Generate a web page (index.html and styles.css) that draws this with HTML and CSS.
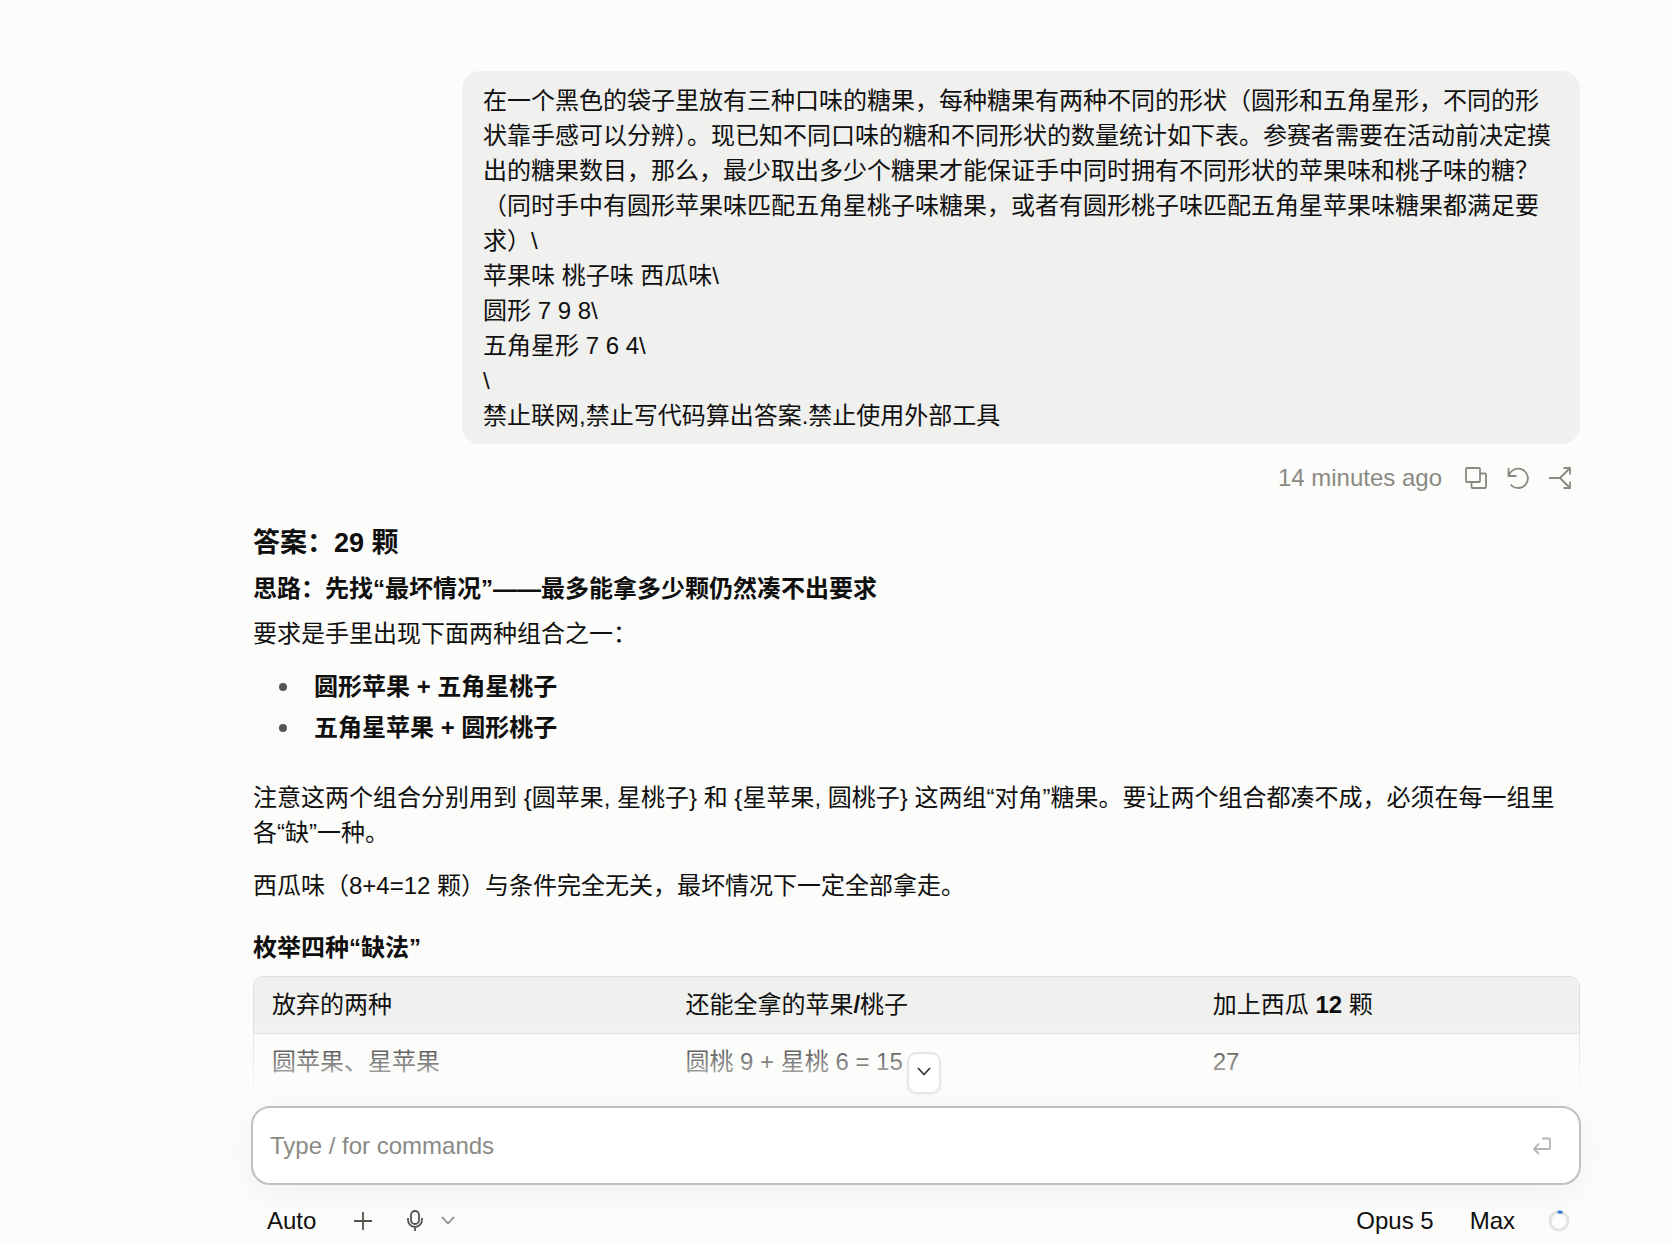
FILE: index.html
```html
<!DOCTYPE html>
<html lang="zh-CN">
<head>
<meta charset="utf-8">
<meta name="viewport" content="width=device-width, initial-scale=1">
<title>答案：29 颗</title>
<link rel="stylesheet" href="styles.css">
</head>
<body>
<div class="app">
  <main class="thread">
    <article class="prompt">
      <p class="bubble">在一个黑色的袋子里放有三种口味的糖果，每种糖果有两种不同的形状（圆形和五角星形，不同的形状靠手感可以分辨）。现已知不同口味的糖和不同形状的数量统计如下表。参赛者需要在活动前决定摸出的糖果数目，那么，最少取出多少个糖果才能保证手中同时拥有不同形状的苹果味和桃子味的糖？（同时手中有圆形苹果味匹配五角星桃子味糖果，或者有圆形桃子味匹配五角星苹果味糖果都满足要求）\<br>苹果味 桃子味 西瓜味\<br>圆形 7 9 8\<br>五角星形 7 6 4\<br>\<br>禁止联网,禁止写代码算出答案.禁止使用外部工具</p>
      <div class="meta">
        <time>14 minutes ago</time>
        <button class="icon-button" type="button" aria-label="Copy">
          <svg width="22" height="22" viewBox="0 0 22 22"><rect x="1" y="1" width="14" height="14" rx="1"/><path d="M15 6.500h5a1 1 0 0 1 1 1V20a1 1 0 0 1-1 1H7.500a1 1 0 0 1-1-1v-5"/></svg>
        </button>
        <button class="icon-button" type="button" aria-label="Retry">
          <svg width="22" height="22" viewBox="0 0 22 22"><path d="M1.500 1v8h8M1.800 8.800A9.700 9.700 0 1 1 3.700 17.500"/></svg>
        </button>
        <button class="icon-button" type="button" aria-label="Fork">
          <svg width="22" height="22" viewBox="0 0 22 22"><path d="M0 11h11L21 1M11 11l10 10M14.500 1H21v6.500M14.500 21H21v-6.500"/></svg>
        </button>
      </div>
    </article>

    <article class="answer">
      <h1>答案：29 颗</h1>
      <h2>思路：先找“最坏情况”——最多能拿多少颗仍然凑不出要求</h2>
      <p class="lead">要求是手里出现下面两种组合之一：</p>
      <ul>
        <li>圆形苹果 + 五角星桃子</li>
        <li>五角星苹果 + 圆形桃子</li>
      </ul>
      <p>注意这两个组合分别用到 {圆苹果, 星桃子} 和 {星苹果, 圆桃子} 这两组“对角”糖果。要让两个组合都凑不成，必须在每一组里各“缺”一种。</p>
      <p>西瓜味（8+4=12 颗）与条件完全无关，最坏情况下一定全部拿走。</p>
      <h3>枚举四种“缺法”</h3>
      <div class="table-frame">
        <table>
          <thead>
            <tr><th class="col-drop">放弃的两种</th><th class="col-keep">还能全拿的苹果<b>/</b>桃子</th><th>加上西瓜 <b>12</b> 颗</th></tr>
          </thead>
          <tbody>
            <tr><td>圆苹果、星苹果</td><td>圆桃 9 + 星桃 6 = 15</td><td>27</td></tr>
            <tr><td></td><td></td><td></td></tr>
          </tbody>
        </table>
      </div>
    </article>
  </main>

  <footer class="dock">
    <button class="jump" type="button" aria-label="Scroll to bottom">
      <svg width="14" height="9" viewBox="0 0 14 9"><path d="M1 1l6 6.500L13 1"/></svg>
    </button>
    <form class="composer">
      <input type="text" aria-label="Message" placeholder="Type / for commands">
      <button class="send" type="button" aria-label="Send">
        <svg width="18" height="18" viewBox="0 0 18 18"><path d="M9 1.500h7a1 1 0 0 1 1 1V11a1 1 0 0 1-1 1H1M6 6.500L1 12l5 5"/></svg>
      </button>
    </form>
    <div class="toolbar">
      <button class="text-button" type="button">Auto</button>
      <button class="tool plus" type="button" aria-label="Add">
        <svg width="18" height="18" viewBox="0 0 18 18"><path d="M9 0v18M0 9h18"/></svg>
      </button>
      <button class="tool mic" type="button" aria-label="Dictate">
        <svg width="16" height="22" viewBox="0 0 16 22"><rect x="4" y="1" width="8" height="13" rx="4"/><path d="M1 8v2a7 7 0 0 0 14 0V8M8 17v4"/></svg>
      </button>
      <button class="tool more" type="button" aria-label="Dictation options">
        <svg width="14" height="9" viewBox="0 0 14 9"><path d="M1 1l6 6.500L13 1"/></svg>
      </button>
      <span class="spacer"></span>
      <button class="text-button" type="button">Opus 5</button>
      <button class="text-button effort" type="button">Max</button>
      <button class="tool usage" type="button" aria-label="Context usage">
        <svg width="22" height="22" viewBox="0 0 22 22"><circle class="track" cx="11" cy="11" r="9"/><path class="used" d="M10.800 2a9 9 0 0 1 2.400.3"/></svg>
      </button>
    </div>
  </footer>
</div>
</body>
</html>
```

FILE: styles.css
```css
:root {
  --page: #fcfcfb;
  --panel: #f0f0ef;
  --ink: #0f0f0e;
  --muted: #8a8a84;
  --line: #dededd;
}

* {
  box-sizing: border-box;
}

body,
h1,
h2,
h3,
p,
ul {
  margin: 0;
}

body {
  background: var(--page);
  color: var(--ink);
  font: 24px/35px "Liberation Sans", "Noto Sans CJK SC", sans-serif;
}

button,
input {
  font: inherit;
  color: inherit;
  background: none;
  border: 0;
  padding: 0;
}

svg {
  display: block;
  fill: none;
  stroke: currentColor;
  stroke-width: 1.800;
}

.app {
  display: flex;
  flex-direction: column;
  height: 100vh;
}

.thread {
  position: relative;
  flex: 1;
  min-height: 0;
  overflow: hidden;
  padding: 71px 93px 0 253px;
}

.thread::after {
  content: "";
  position: absolute;
  left: 0;
  right: 0;
  bottom: 0;
  height: 84px;
  background: linear-gradient(to bottom, transparent, var(--page));
}

.prompt {
  display: flex;
  flex-direction: column;
  align-items: flex-end;
}

.bubble {
  max-width: 1118px;
  padding: 12px 20px 11px 21px;
  border-radius: 18px;
  background: var(--panel);
}

.meta {
  display: flex;
  align-items: center;
  gap: 20px;
  padding: 16px 9px 0 0;
  color: var(--muted);
}

.meta time {
  margin-right: 3px;
}

.answer {
  padding-top: 28px;
}

h1 {
  font-size: 27px;
  line-height: 40px;
  font-weight: 700;
}

h2,
h3 {
  font-size: 24px;
  line-height: 35px;
  font-weight: 700;
}

h2 {
  margin-top: 8px;
}

.answer p {
  margin-top: 18px;
  padding-right: 8px;
}

.answer .lead {
  margin-top: 10px;
}

ul {
  display: flex;
  flex-direction: column;
  gap: 6px;
  margin: 18px 0 35px;
  padding: 0;
  list-style: none;
}

li {
  display: flex;
  align-items: center;
  gap: 27px;
  padding-left: 26px;
  font-weight: 700;
}

li::before {
  content: "";
  width: 8px;
  height: 8px;
  border-radius: 50%;
  background: #555553;
}

h3 {
  margin-top: 27px;
}

.table-frame {
  margin-top: 11px;
  border: 1px solid var(--line);
  border-radius: 10px;
  overflow: hidden;
}

table {
  width: 100%;
  table-layout: fixed;
  border-collapse: collapse;
}

th,
td {
  height: 56px;
  padding: 0 18px;
  border-bottom: 1px solid var(--line);
  text-align: left;
  font-weight: 400;
}

th {
  background: var(--panel);
}

.col-drop {
  width: 31.200%;
}

.col-keep {
  width: 39.800%;
}

.dock {
  position: relative;
  padding: 0 92px 0 251px;
}

.jump {
  position: absolute;
  z-index: 1;
  top: -54px;
  left: calc(50% + 87px);
  translate: -50%;
  display: grid;
  place-items: center;
  width: 34px;
  height: 42px;
  padding-bottom: 4px;
  border: 2px solid #e7e7e6;
  border-radius: 10px;
  background: #fff;
  color: #3a3a38;
  box-shadow: 0 2px 4px #0000000a;
}

.composer {
  display: flex;
  align-items: center;
  height: 79px;
  padding: 0 28px 0 17px;
  border: 2px solid #c0c0be;
  border-radius: 19px;
  background: #fff;
  box-shadow: 0 8px 36px #0000000d;
}

.composer input {
  flex: 1;
  min-width: 0;
  outline: 0;
}

.composer input::placeholder {
  color: var(--muted);
  opacity: 1;
}

.send {
  color: #b4b4b1;
}

.toolbar {
  display: flex;
  align-items: center;
  padding: 18px 11px 6px 16px;
}

.tool {
  color: #52524f;
}

.plus {
  margin-left: 38px;
}

.mic {
  margin-left: 35px;
}

.more {
  margin-left: 18px;
  color: #8a8a87;
}

.spacer {
  flex: 1;
}

.effort {
  margin-left: 36px;
}

.usage {
  margin-left: 33px;
}

.track {
  stroke: #e3e3e2;
  stroke-width: 3;
}

.used {
  stroke: #2f7ad9;
  stroke-width: 3;
  stroke-linecap: round;
}
```
